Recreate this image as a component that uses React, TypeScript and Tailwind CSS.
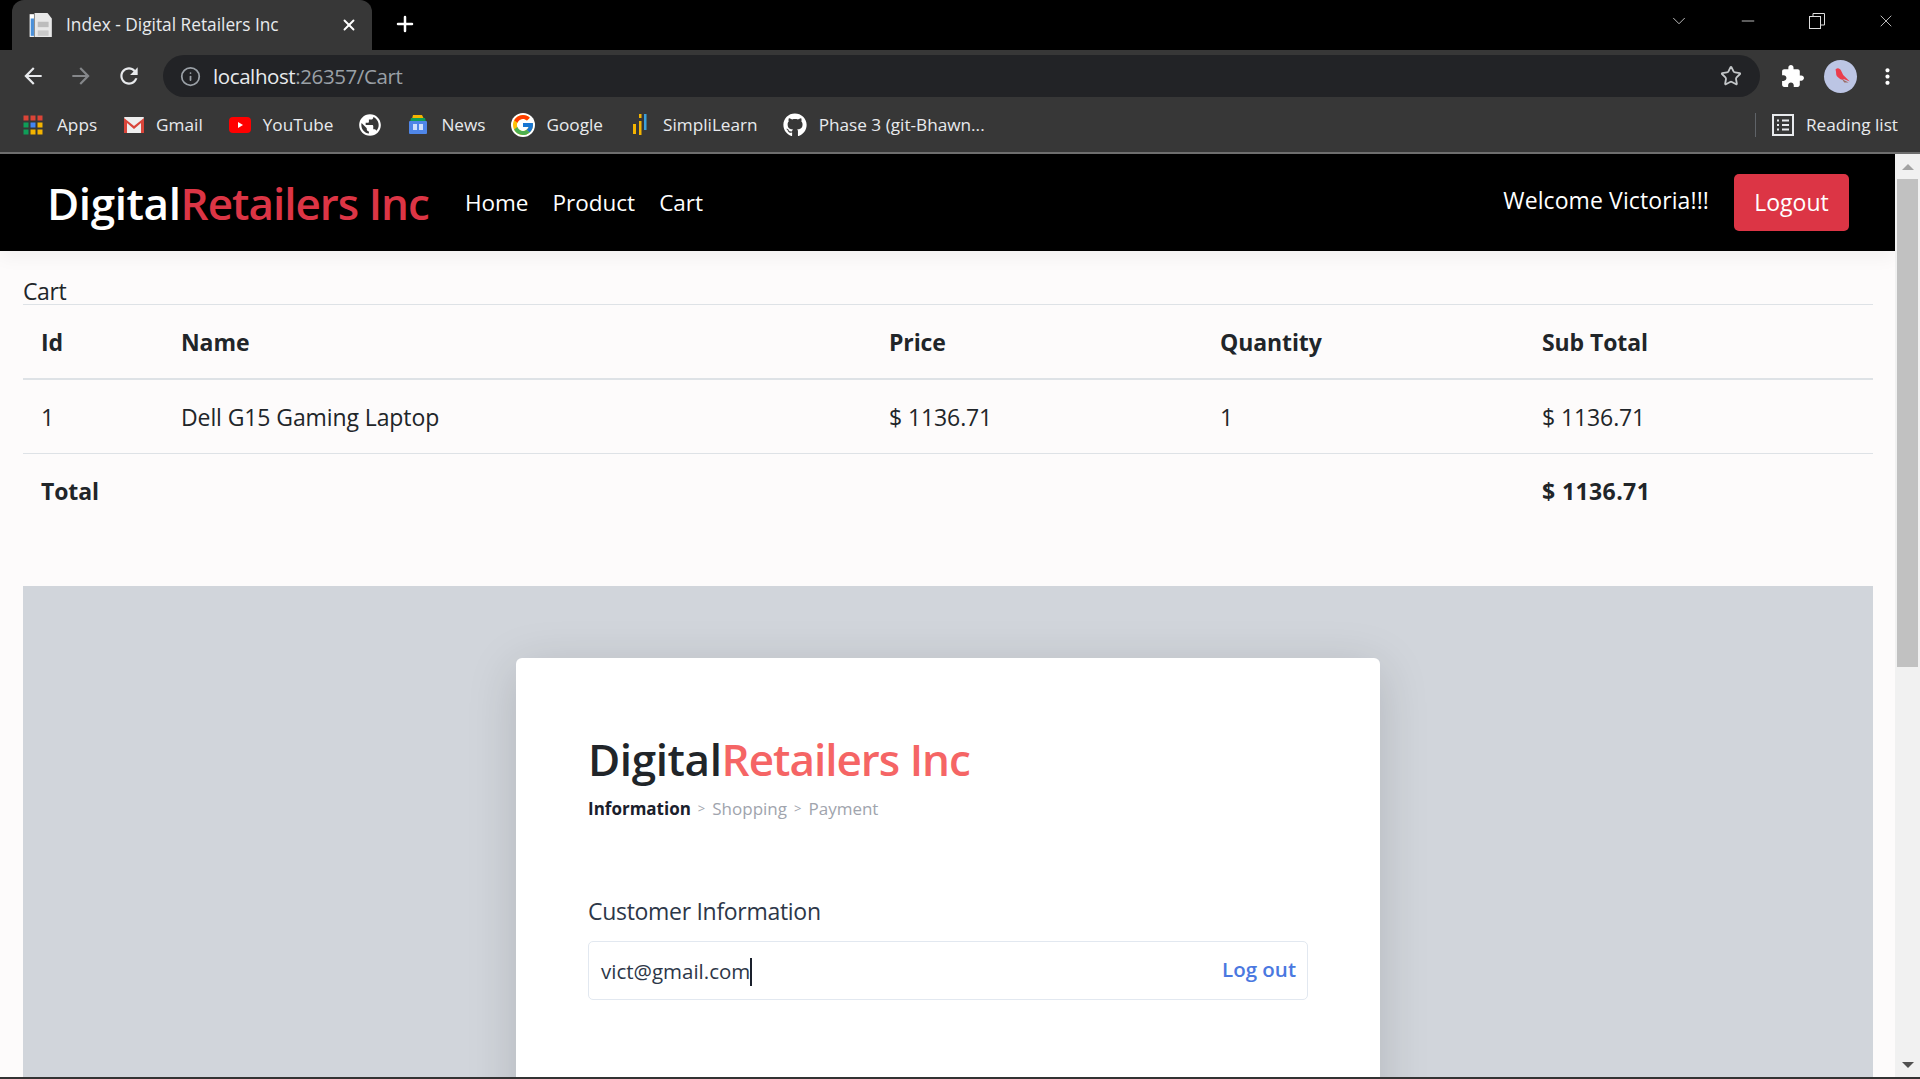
import { Info, Star, Plus, X, ChevronDown, Minus } from "lucide-react";
import { FaGithub } from "react-icons/fa";
import { FcGoogle } from "react-icons/fc";

const font = "font-['Open_Sans','Noto_Sans',sans-serif]";

const AppsIcon = () => (
  <svg width="20" height="20" viewBox="0 0 20 20">
    {["#db4437", "#db4437", "#db4437", "#0f9d58", "#4285f4", "#f4b400", "#0f9d58", "#f4b400", "#f4b400"].map((c, i) => (
      <rect key={i} x={(i % 3) * 7 + 0.5} y={Math.floor(i / 3) * 7 + 0.5} width="5" height="5" fill={c} />
    ))}
  </svg>
);

const GmailIcon = () => (
  <svg width="22" height="18" viewBox="0 0 22 18">
    <rect x="1" y="1" width="20" height="16" rx="1" fill="#eee" />
    <path d="M1 2l10 8 10-8v15h-3V7l-7 6-7-6v10H1z" fill="#d9453a" />
  </svg>
);

const YoutubeIcon = () => (
  <svg width="22" height="16" viewBox="0 0 22 16">
    <rect width="22" height="16" rx="4" fill="#f00" />
    <path d="M9 5l5 3-5 3z" fill="#fff" />
  </svg>
);

const NewsIcon = () => (
  <svg width="20" height="22" viewBox="0 0 20 22">
    <path d="M5 1h9l2 4H4z" fill="#f4b400" />
    <path d="M3 4h14l1 4H2z" fill="#0f9d58" />
    <rect x="1" y="7" width="18" height="13" rx="1" fill="#4f86e8" />
    <rect x="5" y="10" width="4" height="6" fill="#cfe0fb" />
    <rect x="11" y="10" width="4" height="6" fill="#cfe0fb" />
  </svg>
);

const SimpliIcon = () => (
  <svg width="16" height="24" viewBox="0 0 16 24">
    <rect x="1" y="11" width="3" height="10" fill="#f4b400" />
    <rect x="7" y="1" width="2.5" height="4" fill="#f4b400" />
    <rect x="7" y="8" width="2.5" height="14" fill="#f4b400" />
    <rect x="12" y="1" width="2.5" height="16" fill="#3aa0dc" />
  </svg>
);

const DocIcon = () => (
  <svg width="24" height="26" viewBox="0 0 22 24">
    <rect x="0.5" y="2" width="4" height="21" fill="#fff" />
    <rect x="1.5" y="6" width="3" height="16" fill="#4a90d9" />
    <path d="M5 1h12l4 5v17H5z" fill="#e8e8e8" />
    <rect x="8" y="9" width="10" height="5" fill="#bdbdbd" />
    <rect x="8" y="17" width="10" height="5" fill="#c9c9c9" />
  </svg>
);

const ReadingIcon = () => (
  <svg width="22" height="22" viewBox="0 0 22 22" fill="none" stroke="#e8eaed" strokeWidth="2">
    <rect x="1" y="1" width="20" height="20" />
    <path d="M5 6.5h2M10 6.5h7M5 11h2M10 11h7M5 15.5h2M10 15.5h7" />
  </svg>
);

const MaterialIcon = ({ d, size, color, className }: { d: string; size: number; color: string; className?: string }) => (
  <svg className={className} width={size} height={size} viewBox="0 0 24 24" fill={color}>
    <path d={d} />
  </svg>
);

const backPath = "M20 11H7.83l5.59-5.59L12 4l-8 8 8 8 1.41-1.41L7.83 13H20v-2z";
const forwardPath = "M4 11h12.17l-5.59-5.59L12 4l8 8-8 8-1.41-1.41L16.17 13H4v-2z";
const reloadPath =
  "M17.65 6.35C16.2 4.9 14.21 4 12 4c-4.42 0-7.99 3.58-7.99 8s3.57 8 7.99 8c3.73 0 6.84-2.55 7.73-6h-2.08c-.82 2.33-3.04 4-5.65 4-3.31 0-6-2.69-6-6s2.69-6 6-6c1.66 0 3.14.69 4.22 1.78L13 11h7V4l-2.35 2.35z";
const extensionPath =
  "M20.5 11H19V7c0-1.1-.9-2-2-2h-4V3.5C13 2.12 11.88 1 10.5 1S8 2.12 8 3.5V5H4c-1.1 0-1.99.9-1.99 2v3.8H3.5c1.49 0 2.7 1.21 2.7 2.7s-1.21 2.7-2.7 2.7H2V20c0 1.1.9 2 2 2h3.8v-1.5c0-1.49 1.21-2.7 2.7-2.7 1.49 0 2.7 1.21 2.7 2.7V22H17c1.1 0 2-.9 2-2v-4h1.5c1.38 0 2.5-1.12 2.5-2.5S21.88 11 20.5 11z";
const globePath =
  "M12 2C6.48 2 2 6.48 2 12s4.48 10 10 10 10-4.48 10-10S17.52 2 12 2zm-1 17.93c-3.95-.49-7-3.85-7-7.93 0-.62.08-1.21.21-1.79L9 15v1c0 1.1.9 2 2 2v1.93zm6.9-2.54c-.26-.81-1-1.39-1.9-1.39h-1v-3c0-.55-.45-1-1-1H8v-2h2c.55 0 1-.45 1-1V7h2c1.1 0 2-.9 2-2v-.41c2.93 1.19 5 4.06 5 7.41 0 2.08-.8 3.97-2.1 5.39z";
const morePath =
  "M12 8c1.1 0 2-.9 2-2s-.9-2-2-2-2 .9-2 2 .9 2 2 2zm0 2c-1.1 0-2 .9-2 2s.9 2 2 2 2-.9 2-2-.9-2-2-2zm0 6c-1.1 0-2 .9-2 2s.9 2 2 2 2-.9 2-2-.9-2-2-2z";

const Avatar = () => (
  <div className="w-[33px] h-[33px] rounded-full bg-[#bcc5e4] flex items-center justify-center">
    <svg width="22" height="22" viewBox="0 0 20 20">
      <path d="M5 4c2-2 4-1 5 1l2 4 6 6-5-2c-2 1-4 0-6-2C5 9 6 7 5 4z" fill="#ea3d4c" />
      <path d="M11 13l6 3-4 0z" fill="#9b6a62" />
    </svg>
  </div>
);

const Bookmark = ({ icon, label, gap = "gap-[12px]" }: { icon: React.ReactNode; label: string; gap?: string }) => (
  <div className={`flex items-center ${gap} text-[#e8eaed] text-[17.2px]`}>
    {icon}
    <span>{label}</span>
  </div>
);

const BrowserChrome = () => (
  <div className="shrink-0">
    {/* tabs */}
    <div className="h-[50px] bg-black flex items-end pl-[12px]">
      <div className="w-[360px] h-[50px] bg-[#373737] rounded-t-[12px] flex items-center pl-[17px] pr-[14px]">
        <DocIcon />
        <span className="ml-[13px] text-[17.3px] text-[#e8eaed] -mt-[1px]">Index - Digital Retailers Inc</span>
        <X className="ml-auto" size={18} color="#fff" strokeWidth={2.5} />
      </div>
      <Plus className="ml-[21px] mb-[14px]" size={24} color="#fff" strokeWidth={2.5} />
      <div className="ml-auto flex items-center mb-[18px]">
        <div className="w-[69px] flex justify-center">
          <ChevronDown size={22} color="#ccc" strokeWidth={1} />
        </div>
        <div className="w-[69px] flex justify-center">
          <Minus size={20} color="#ddd" strokeWidth={1} />
        </div>
        <div className="w-[69px] flex justify-center">
          <svg width="16" height="16" viewBox="0 0 16 16" fill="none" stroke="#ddd" strokeWidth="1">
            <rect x="0.5" y="3.5" width="11" height="12" />
            <path d="M4 3V0.5h11.5V12H12" />
          </svg>
        </div>
        <div className="w-[69px] flex justify-center">
          <X size={20} color="#ddd" strokeWidth={1} />
        </div>
      </div>
    </div>
    {/* address bar */}
    <div className="h-[52px] bg-[#373737] flex items-center pl-[20px] pr-[20px]">
      <MaterialIcon d={backPath} size={26} color="#e8eaed" />
      <MaterialIcon className="ml-[22px]" d={forwardPath} size={26} color="#85878a" />
      <MaterialIcon className="ml-[22px]" d={reloadPath} size={26} color="#e8eaed" />
      <div className="ml-[21px] flex-1 h-[42px] bg-[#222326] rounded-full flex items-center pl-[16px] pr-[18px]">
        <Info className="ml-[1px]" size={21} color="#9aa0a6" />
        <span className="ml-[12px] text-[20.5px] tracking-[-0.4px] text-[#e8eaed]">
          localhost<span className="text-[#9aa0a6]">:26357/Cart</span>
        </span>
        <Star size={22} className="ml-auto" color="#c4c7c9" strokeWidth={2} />
      </div>
      <MaterialIcon className="ml-[20px]" d={extensionPath} size={25} color="#fff" />
      <div className="ml-[19px]">
        <Avatar />
      </div>
      <MaterialIcon className="ml-[18px]" d={morePath} size={25} color="#fff" />
    </div>
    {/* bookmarks */}
    <div className="h-[52px] bg-[#373737] border-b-[2px] border-[#6e6e6e] flex items-center pl-[23px] pr-[22px] pb-[4px]">
      <Bookmark icon={<AppsIcon />} label="Apps" gap="gap-[14px]" />
      <div className="ml-[26px]">
        <Bookmark icon={<GmailIcon />} label="Gmail" gap="gap-[11px]" />
      </div>
      <div className="ml-[26px]">
        <Bookmark icon={<YoutubeIcon />} label="YouTube" />
      </div>
      <MaterialIcon className="ml-[24px]" d={globePath} size={26} color="#fff" />
      <div className="ml-[25px]">
        <Bookmark icon={<NewsIcon />} label="News" gap="gap-[13px]" />
      </div>
      <div className="ml-[25px]">
        <Bookmark icon={<FcGoogle size={24} className="bg-white rounded-full" />} label="Google" />
      </div>
      <div className="ml-[29px]">
        <Bookmark icon={<SimpliIcon />} label="SimpliLearn" gap="gap-[15px]" />
      </div>
      <div className="ml-[25px]">
        <Bookmark icon={<FaGithub size={24} color="#fff" />} label="Phase 3 (git-Bhawn..." />
      </div>
      <div className="ml-auto h-[24px] w-px bg-[#5f6368]" />
      <div className="ml-[16px]">
        <Bookmark icon={<ReadingIcon />} label="Reading list" />
      </div>
    </div>
  </div>
);

const Logo = ({ accent, base }: { accent: string; base: string }) => (
  <div className={`text-[44px] font-semibold leading-[50px] tracking-[-0.4px] whitespace-nowrap ${base}`}>
    Digital<span className={`tracking-[-1px] ${accent}`}>Retailers Inc</span>
  </div>
);

const Navbar = () => (
  <div className="h-[97px] bg-black flex items-center pl-[47px] pr-[46px] shadow-[0_8px_16px_rgba(0,0,0,0.04)]">
    <Logo base="text-white" accent="text-[#dc3545]" />
    <div className="ml-[36px] flex gap-[24px] text-[22.5px] text-white">
      <span>Home</span>
      <span>Product</span>
      <span>Cart</span>
    </div>
    <span className="ml-auto text-[23px] text-white tracking-[0.1px] -mt-[5px]">Welcome Victoria!!!</span>
    <button className="ml-[25px] w-[115px] h-[57px] bg-[#dc3545] text-white text-[23px] rounded-[5px]">
      Logout
    </button>
  </div>
);

const CartTable = () => (
  <table className="w-full table-fixed border-collapse text-[23px] text-[#212529] tracking-[-0.1px]">
    <colgroup>
      <col className="w-[140px]" />
      <col className="w-[708px]" />
      <col className="w-[331px]" />
      <col className="w-[322px]" />
      <col />
    </colgroup>
    <thead>
      <tr className="h-[74px] border-b-2 border-[#dee2e6] text-left">
        <th className="pl-[18px] pt-[2px] font-bold">Id</th>
        <th className="pl-[18px] pt-[2px] font-bold">Name</th>
        <th className="pl-[18px] pt-[2px] font-bold">Price</th>
        <th className="pl-[18px] pt-[2px] font-bold">Quantity</th>
        <th className="pl-[18px] pt-[2px] font-bold">Sub Total</th>
      </tr>
    </thead>
    <tbody>
      <tr className="h-[74px] border-b border-[#dee2e6]">
        <td className="pl-[18px] pt-[2px]">1</td>
        <td className="pl-[18px] pt-[2px]">Dell G15 Gaming Laptop</td>
        <td className="pl-[18px] pt-[2px]">$ 1136.71</td>
        <td className="pl-[18px] pt-[2px]">1</td>
        <td className="pl-[18px] pt-[2px]">$ 1136.71</td>
      </tr>
      <tr className="h-[74px] font-bold">
        <td className="pl-[18px] pt-[2px]">Total</td>
        <td />
        <td />
        <td />
        <td className="pl-[18px] pt-[2px] tracking-[0.4px]">$ 1136.71</td>
      </tr>
    </tbody>
  </table>
);

const CheckoutCard = () => (
  <div className="mt-[72px] mx-auto w-[864px] h-[700px] bg-white rounded-[6px] shadow-[0_10px_50px_rgba(0,0,0,0.15)] pl-[72px] pr-[72px] pt-[76px]">
    <Logo base="text-[#212529]" accent="text-[#f56565]" />
    <div className="mt-[12px] flex items-center text-[17px] text-[#a0a4ad]">
      <span className="font-bold text-[#1a202c]">Information</span>
      <span className="ml-[7px] text-[13px]">&gt;</span>
      <span className="ml-[7px]">Shopping</span>
      <span className="ml-[7px] text-[13px]">&gt;</span>
      <span className="ml-[7px]">Payment</span>
    </div>
    <div className="mt-[72px] text-[23px] text-[#2d3748] tracking-[-0.3px]">Customer Information</div>
    <div className="mt-[13px] h-[59px] border border-[#e2e8f0] rounded-[5px] flex items-center pl-[12px] pr-[11px]">
      <span className="text-[20.5px] text-[#2d3748] mt-[2px]">vict@gmail.com</span>
      <span className="w-[2px] h-[28px] bg-[#1a202c] mt-[2px]" />
      <span className="ml-auto text-[20.5px] font-semibold text-[#4a78e0] -mt-[3px]">Log out</span>
    </div>
  </div>
);

const Scrollbar = () => (
  <div className="w-[25px] shrink-0 bg-[#f1f1f1] flex flex-col items-center">
    <div className="h-[25px] flex items-center justify-center">
      <div className="w-0 h-0 border-x-[6px] border-x-transparent border-b-[6px] border-b-[#a3a3a3]" />
    </div>
    <div className="w-[21px] h-[488px] bg-[#c1c1c1]" />
    <div className="mt-auto h-[25px] flex items-center justify-center">
      <div className="w-0 h-0 border-x-[6px] border-x-transparent border-t-[6px] border-t-[#505050]" />
    </div>
  </div>
);

export default function App() {
  return (
    <div className={`${font} w-[1920px] h-[1079px] overflow-hidden flex flex-col bg-white`}>
      <BrowserChrome />
      <div className="flex-1 min-h-0 flex">
        <div className="flex-1 min-w-0 overflow-hidden bg-[#fdfbfb]">
          <Navbar />
          <div className="pl-[23px] pr-[22px]">
            <div className="pt-[24px] h-[54px] border-b border-[#dee2e6] text-[23px] text-[#212529] leading-[32px] tracking-[-0.4px]">Cart</div>
            <CartTable />
            <div className="mt-[59px] h-[600px] bg-[#d1d5db] overflow-hidden">
              <CheckoutCard />
            </div>
          </div>
        </div>
        <Scrollbar />
      </div>
      <div className="h-[2px] bg-[#333] shrink-0" />
    </div>
  );
}
